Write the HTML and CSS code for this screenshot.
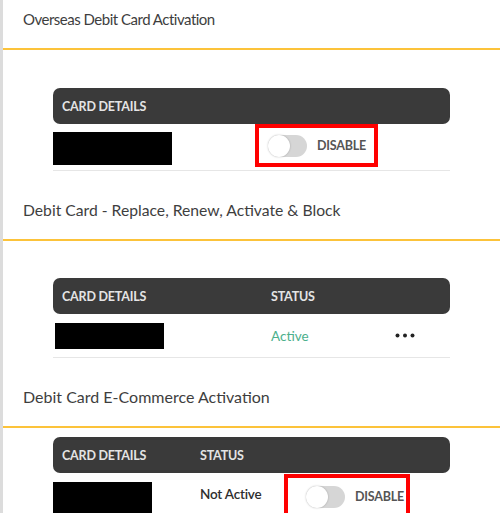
FILE: index.html
```html
<!DOCTYPE html>
<html>
<head>
<meta charset="utf-8">
<link rel="stylesheet" href="styles.css">
</head>
<body>
<div class="page">
  <section class="section s1">
    <h2 class="title">Overseas Debit Card Activation</h2>
    <div class="table">
      <div class="thead">
        <span>CARD DETAILS</span>
      </div>
      <div class="row row1">
        <div class="mask mask1"></div>
        <div class="mark mark1">
          <span class="toggle"><span class="knob"></span></span>
          <span class="tlabel">DISABLE</span>
        </div>
      </div>
    </div>
  </section>

  <section class="section s2">
    <h2 class="title">Debit Card - Replace, Renew, Activate &amp; Block</h2>
    <div class="table">
      <div class="thead thead2">
        <span>CARD DETAILS</span>
        <span>STATUS</span>
      </div>
      <div class="row row2">
        <div class="mask mask2"></div>
        <div class="active">Active</div>
        <svg class="dots" width="20" height="5" viewBox="0 0 20 5"><circle cx="2.5" cy="2.5" r="2" fill="#222"/><circle cx="10" cy="2.5" r="2" fill="#222"/><circle cx="17.5" cy="2.5" r="2" fill="#222"/></svg>
      </div>
    </div>
  </section>

  <section class="section s3">
    <h2 class="title">Debit Card E-Commerce Activation</h2>
    <div class="table">
      <div class="thead thead3">
        <span>CARD DETAILS</span>
        <span>STATUS</span>
      </div>
      <div class="row row3">
        <div class="mask mask3"></div>
        <div class="inactive">Not Active</div>
        <div class="mark mark3">
          <span class="toggle"><span class="knob"></span></span>
          <span class="tlabel">DISABLE</span>
        </div>
      </div>
    </div>
  </section>
</div>
</body>
</html>
```
FILE: styles.css
```css
* { box-sizing: border-box; }
html, body { margin: 0; padding: 0; background: #fff; }
body {
  font-family: Lato, "Open Sans", Arial, sans-serif;
  width: 500px;
  height: 513px;
  overflow: hidden;
}
.page {
  border-left: 3px solid #dcdcdc;
  min-height: 513px;
}
.section { display: flex; flex-direction: column; }
.title {
  margin: 0;
  font-weight: 400;
  font-size: 16px;
  line-height: 20px;
  color: #3e3e3e;
  padding: 9px 20px 19px;
  border-bottom: 2px solid #fcc33a;
}
.s1 .title { font-size: 15px; letter-spacing: -0.5px; }
.s2 .title { font-size: 15.7px; }
.s2 .title, .s3 .title { margin-top: 20px; }
.table {
  margin-left: 50px;
  width: 397px;
  margin-top: 38px;
}
.s2 .table { margin-top: 37px; }
.s3 .table { margin-top: 9px; }
.thead {
  background: #3a3a3a;
  border-radius: 7px;
  height: 36px;
  display: grid;
  align-items: center;
  padding-left: 9px;
  color: #e4e4e4;
  font-weight: 700;
  font-size: 12.5px;
  letter-spacing: -0.2px;
}
.thead2 { grid-template-columns: 209px 1fr; }
.thead3 { grid-template-columns: 138px 1fr; }
.row {
  display: grid;
  align-items: center;
  border-bottom: 1px solid #e6e6e6;
}
.row1 { grid-template-columns: 202px auto 1fr; height: 47px; align-items: start; }
.row2 { grid-template-columns: 218px 124px 1fr; height: 44px; }
.row3 { grid-template-columns: 147px 84px 1fr; height: 60px; align-items: start; border-bottom: none; }
.mask { background: #000; }
.mask1 { width: 119px; height: 33px; margin-top: 8px; }
.mask2 { width: 109px; height: 26px; margin-left: 2px; margin-top: 0; }
.mask3 { width: 99px; height: 40px; margin-top: 9px; }
.active { color: #4cb08c; font-size: 13.5px; }
.inactive { color: #2e2e2e; font-size: 13.5px; font-weight: 600; letter-spacing: -0.2px; margin-top: 13px; }
.mark {
  border: 4px solid #f00;
  display: flex;
  align-items: center;
}
.mark1 { width: 123px; height: 43px; padding-left: 9px; gap: 10px; }
.mark3 { width: 126px; height: 45px; padding-left: 18px; margin-top: 1px; gap: 10px; }
.toggle {
  position: relative;
  width: 39px;
  height: 22px;
  border-radius: 11px;
  background: #d6d6d6;
  flex: none;
}
.knob {
  position: absolute;
  left: 0;
  top: 0;
  width: 22px;
  height: 22px;
  border-radius: 50%;
  background: #fff;
  box-shadow: 0 0 2px rgba(0,0,0,0.25);
}
.tlabel {
  font-size: 12.5px;
  font-weight: 700;
  letter-spacing: -0.2px;
  color: #555;
}
.dots { display: block; }
```
